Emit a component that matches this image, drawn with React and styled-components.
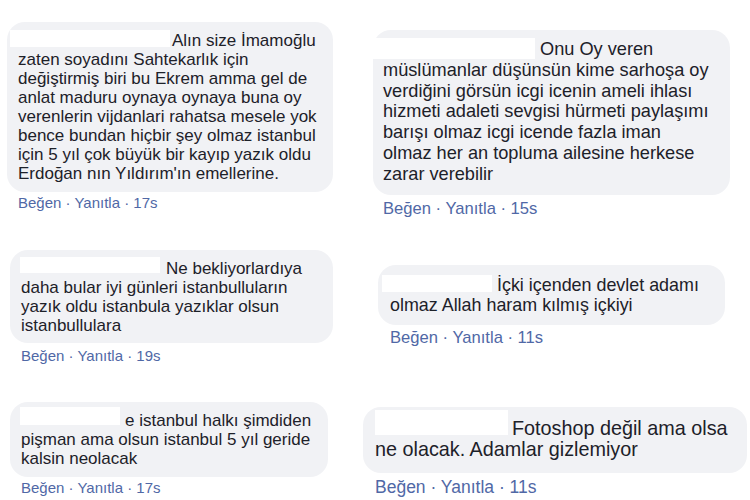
import React from 'react';
import styled, { createGlobalStyle } from 'styled-components';

const GlobalStyle = createGlobalStyle`
  html, body { margin: 0; padding: 0; background: #fff; }
  body { font-family: "Liberation Sans", Arial, sans-serif; }
`;

const Page = styled.div`
  width: 750px;
  height: 500px;
  overflow: hidden;
  display: grid;
  grid-template-columns: 363px 387px;
  background: #fff;
`;

const Column = styled.div`
  display: flex;
  flex-direction: column;
  align-items: flex-start;
`;

const Comment = styled.div`
  display: flex;
  flex-direction: column;
  margin-top: ${p => p.$top}px;
  margin-left: ${p => p.$left}px;
`;

const Bubble = styled.div`
  width: ${p => p.$width}px;
  box-sizing: border-box;
  background: #f1f2f5;
  border-radius: 18px;
  padding: ${p => p.$padTop}px ${p => p.$padX}px ${p => p.$padBottom}px;
  color: #1d2129;
  font-size: ${p => p.$fs}px;
  line-height: ${p => p.$lh}px;
  white-space: nowrap;
`;

const Line = styled.span`
  display: block;
`;

const Hidden = styled.span`
  display: inline-block;
  vertical-align: top;
  background: #fff;
  width: ${p => p.$w}px;
  height: ${p => p.$h}px;
  margin-left: ${p => p.$ml}px;
  margin-right: ${p => p.$mr}px;
  margin-top: ${p => p.$mt}px;
`;

const Meta = styled.div`
  margin-top: ${p => p.$mt}px;
  padding-left: ${p => p.$padX}px;
  color: #5068a6;
  font-size: ${p => p.$fs}px;
  line-height: ${p => p.$lh}px;
  white-space: nowrap;
`;

const left = [
  {
    top: 22, left: 7, width: 326, padTop: 9, padBottom: 9, padX: 11, fs: 17, lh: 19,
    box: { w: 160, h: 17, ml: -8, mr: 2, mt: -1 },
    lines: [
      'Alın size İmamoğlu',
      'zaten soyadını Sahtekarlık için',
      'değiştirmiş biri bu Ekrem amma gel de',
      'anlat maduru oynaya oynaya buna oy',
      'verenlerin vijdanlari rahatsa mesele yok',
      'bence bundan hiçbir şey olmaz istanbul',
      'için 5 yıl çok büyük bir kayıp yazık oldu',
      "Erdoğan nın Yıldırım'ın emellerine.",
    ],
    meta: { mt: 3, fs: 15, lh: 16, time: '17s' },
  },
  {
    top: 39, left: 10, width: 323, padTop: 8.5, padBottom: 8.5, padX: 11, fs: 17, lh: 19,
    box: { w: 140, h: 16, ml: -1, mr: 6, mt: -2 },
    lines: [
      'Ne bekliyorlardıya',
      'daha bular iyi günleri istanbulluların',
      'yazık oldu istanbula yazıklar olsun',
      'istanbullulara',
    ],
    meta: { mt: 5, fs: 15, lh: 16, time: '19s' },
  },
  {
    top: 38, left: 10, width: 318, padTop: 8.5, padBottom: 9.5, padX: 11, fs: 17, lh: 19,
    box: { w: 100, h: 18, ml: -1, mr: 5, mt: -4 },
    lines: [
      'e istanbul halkı şimdiden',
      'pişman ama olsun istanbul 5 yıl geride',
      'kalsin neolacak',
    ],
    meta: { mt: 3, fs: 15, lh: 16, time: '17s' },
  },
];

const right = [
  {
    top: 30, left: 10, width: 357, padTop: 9, padBottom: 10, padX: 10, fs: 18.2, lh: 20.8,
    box: { w: 163, h: 21, ml: -11, mr: 5, mt: -1 },
    lines: [
      'Onu Oy veren',
      'müslümanlar düşünsün kime sarhoşa oy',
      'verdiğini görsün icgi icenin ameli ihlası',
      'hizmeti adaleti sevgisi hürmeti paylaşımı',
      'barışı olmaz icgi icende fazla iman',
      'olmaz her an topluma ailesine herkese',
      'zarar verebilir',
    ],
    meta: { mt: 5.5, fs: 16.6, lh: 17, time: '15s' },
  },
  {
    top: 47.5, left: 15, width: 347, padTop: 10, padBottom: 10, padX: 12, fs: 17.9, lh: 20,
    box: { w: 110, h: 17, ml: -8, mr: 5, mt: 0 },
    lines: [
      'İçki içenden devlet adamı',
      'olmaz Allah haram kılmış içkiyi',
    ],
    meta: { mt: 4.5, fs: 16.6, lh: 17, time: '11s' },
  },
  {
    top: 60.5, left: 0, width: 384, padTop: 11.5, padBottom: 12.5, padX: 12, fs: 19.8, lh: 21,
    box: { w: 133, h: 25, ml: 0, mr: 4, mt: -8 },
    lines: [
      'Fotoshop değil ama olsa',
      'ne olacak. Adamlar gizlemiyor',
    ],
    meta: { mt: 5, fs: 17.5, lh: 18, time: '11s' },
  },
];

const CommentItem = ({ c }) => (
  <Comment $top={c.top} $left={c.left}>
    <Bubble
      $width={c.width}
      $padTop={c.padTop}
      $padBottom={c.padBottom}
      $padX={c.padX}
      $fs={c.fs}
      $lh={c.lh}
    >
      {c.lines.map((l, i) => (
        <Line key={i}>
          {i === 0 && (
            <Hidden $w={c.box.w} $h={c.box.h} $ml={c.box.ml} $mr={c.box.mr} $mt={c.box.mt} />
          )}
          {l}
        </Line>
      ))}
    </Bubble>
    <Meta $mt={c.meta.mt} $padX={c.padX} $fs={c.meta.fs} $lh={c.meta.lh}>
      Beğen · Yanıtla · {c.meta.time}
    </Meta>
  </Comment>
);

const App = () => (
  <>
    <GlobalStyle />
    <Page>
      <Column>
        {left.map((c, i) => <CommentItem key={i} c={c} />)}
      </Column>
      <Column>
        {right.map((c, i) => <CommentItem key={i} c={c} />)}
      </Column>
    </Page>
  </>
);

export default App;
